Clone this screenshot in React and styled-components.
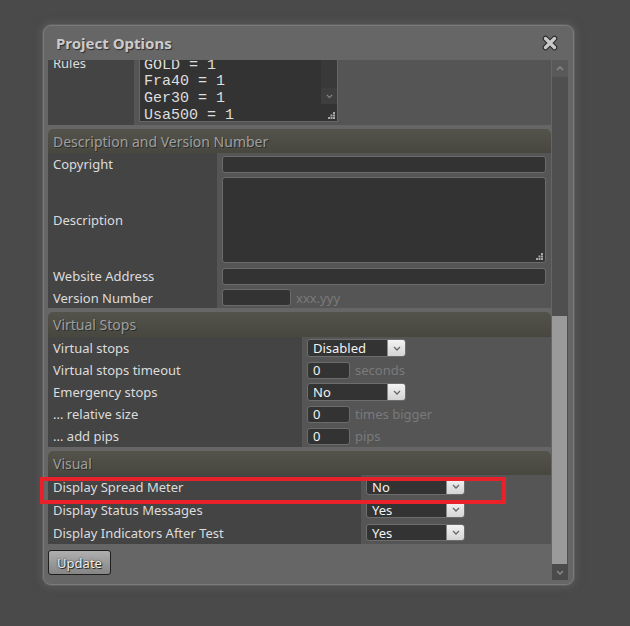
import React from "react";
import styled, { createGlobalStyle } from "styled-components";

const GlobalStyle = createGlobalStyle`
  html, body {
    margin: 0;
    padding: 0;
    background: #4a4a4a;
  }
  body {
    width: 630px;
    height: 626px;
    overflow: hidden;
    font-family: "Noto Sans", "Open Sans", sans-serif;
    font-size: 13px;
    color: #dcdcdc;
  }
`;

const Page = styled.div`
  width: 630px;
  height: 626px;
  box-sizing: border-box;
  padding: 25px 0 0 43px;
`;

const Dialog = styled.div`
  position: relative;
  width: 531px;
  height: 560px;
  box-sizing: border-box;
  display: flex;
  flex-direction: column;
  padding: 0 5px 4px 4px;
  background: #666;
  border: 1px solid #7b7b7b;
  border-radius: 8px;
  box-shadow: 0 0 0 1px #5f5f5f, 0 0 7px 3px rgba(96, 96, 96, 0.55);
`;

const TitleBar = styled.div`
  height: 34px;
  flex-shrink: 0;
  display: flex;
  align-items: center;
  justify-content: space-between;
  padding: 0 10px 1px 8px;
  box-sizing: border-box;
`;

const Title = styled.h1`
  margin: 0;
  font-size: 15px;
  font-weight: 700;
  color: #cbcbcb;
  text-shadow: 1px 1px 1px #2e2e2e;
`;

const CloseButton = styled.button`
  width: 16px;
  height: 16px;
  padding: 0;
  border: 0;
  background: none;
  display: flex;
`;

const Body = styled.div`
  flex: 1;
  display: flex;
  min-height: 0;
`;

const Viewport = styled.div`
  flex: 1;
  display: flex;
  flex-direction: column;
  justify-content: flex-end;
  overflow: hidden;
  padding-right: 1px;
  & > * {
    flex-shrink: 0;
  }
`;

const ScrollBar = styled.div`
  width: 16px;
  display: flex;
  flex-direction: column;
  background: #4f4f4f;
`;

const ScrollButton = styled.div`
  height: ${(p) => (p.$up ? 17 : 16)}px;
  flex-shrink: 0;
  display: flex;
  align-items: center;
  justify-content: center;
  background: ${(p) => (p.$up ? "#595959" : "#4b4b4b")};
`;

const ScrollTrack = styled.div`
  flex: 1;
  display: flex;
  flex-direction: column;
  justify-content: flex-end;
`;

const ScrollThumb = styled.div`
  height: 248px;
  margin-right: 1px;
  background: #9a9a9a;
`;

const Section = styled.section`
  display: flex;
  flex-direction: column;
  margin-top: ${(p) => (p.$first ? 0 : 4)}px;
`;

const SectionHeader = styled.div`
  height: ${(p) => p.$h || 24}px;
  box-sizing: border-box;
  display: flex;
  align-items: center;
  padding-left: 5px;
  border-radius: 5px 5px 0 0;
  background: linear-gradient(#53534b, #47473f);
  font-size: 14px;
  color: #9e9e9e;
  text-shadow: 1px 1px 0 #2c2c2c;
`;

const Row = styled.div`
  display: grid;
  grid-template-columns: ${(p) => p.$label}px 1fr;
  height: ${(p) => p.$h}px;
`;

const LabelCell = styled.div`
  display: flex;
  align-items: ${(p) => (p.$top ? "flex-start" : "center")};
  padding: ${(p) => (p.$top ? "6px" : "0")} 5px 0 5px;
  background: #444;
  white-space: nowrap;
  color: #dcdcdc;
`;

const ValueCell = styled.div`
  display: flex;
  align-items: ${(p) => (p.$end ? "flex-end" : "center")};
  gap: 5px;
  padding: 0 5px ${(p) => (p.$end ? 3 : 0)}px 5px;
  background: #555;
  min-width: 0;
`;

const TextInput = styled.div`
  box-sizing: border-box;
  width: ${(p) => (p.$w ? `${p.$w}px` : "100%")};
  height: ${(p) => p.$h || 17}px;
  flex-shrink: 0;
  display: flex;
  align-items: center;
  padding-left: 5px;
  background: #333;
  border: 1px solid #6b6b6b;
  border-radius: 3px;
  color: #f2f2f2;
  position: relative;
`;

const Unit = styled.span`
  color: #7a7a7a;
  white-space: nowrap;
`;

const Select = styled.div`
  box-sizing: border-box;
  width: 99px;
  height: ${(p) => p.$h}px;
  display: flex;
  background: #333;
  border: 1px solid #6d6d6d;
  border-radius: 3px;
  overflow: hidden;
`;

const SelectValue = styled.span`
  flex: 1;
  display: flex;
  align-items: center;
  padding-left: 5px;
  color: #f2f2f2;
`;

const SelectArrow = styled.span`
  width: 17px;
  display: flex;
  align-items: center;
  justify-content: center;
  background: linear-gradient(#f3f3f3, #d4d4d4);
  border-left: 1px solid #8a8a8a;
`;

const CodeBox = styled.div`
  box-sizing: border-box;
  width: 199px;
  height: 72px;
  display: flex;
  background: #333;
  border: 1px solid #666;
`;

const CodeLines = styled.pre`
  flex: 1;
  margin: 0;
  padding: 6.5px 0 0 4px;
  font-family: "Liberation Mono", "DejaVu Sans Mono", monospace;
  font-size: 15px;
  line-height: 16.7px;
  color: #dedede;
`;

const InnerScroll = styled.div`
  width: 16px;
  display: flex;
  flex-direction: column;
`;

const InnerTrack = styled.div`
  flex: 1;
  background: #393939;
`;

const InnerButton = styled.div`
  height: 16px;
  display: flex;
  align-items: center;
  justify-content: center;
  background: #3e3e3e;
`;

const InnerCorner = styled.div`
  height: 17px;
  display: flex;
  align-items: flex-end;
  justify-content: flex-end;
  padding: 0 2px 2px 0;
  box-sizing: border-box;
`;

const GripSpot = styled.span`
  position: absolute;
  right: 2px;
  bottom: 2px;
  display: flex;
`;

const Footer = styled.div`
  padding: 6px 0 5px 0;
  display: flex;
`;

const Button = styled.button`
  width: 63px;
  height: 25px;
  padding: 0;
  border: 1px solid #1f1f1f;
  border-radius: 3px;
  background: linear-gradient(#afafaf, #858585);
  font-family: "Noto Sans", "Open Sans", sans-serif;
  font-size: 13px;
  color: #f0f0f0;
  text-shadow: 0 0 2px #1a1a1a, 1px 1px 0 #333;
`;

const Highlight = styled.div`
  position: absolute;
  left: -4px;
  top: 451px;
  width: 466px;
  height: 27px;
  box-sizing: border-box;
  border: 4px solid #e8212b;
  pointer-events: none;
`;

const Chevron = ({ dir = "down", color = "#555", w = 8 }) => (
  <svg width={w} height={w / 2 + 1} viewBox="0 0 8 5">
    <path
      d={dir === "down" ? "M1 1 L4 4 L7 1" : "M1 4 L4 1 L7 4"}
      fill="none"
      stroke={color}
      strokeWidth="1.3"
    />
  </svg>
);

const CloseIcon = () => (
  <svg width="16" height="16" viewBox="0 0 16 16">
    <g strokeLinecap="round">
      <path d="M3.5 3.5 L12.5 12.5 M12.5 3.5 L3.5 12.5" stroke="#2a2a2a" strokeWidth="5.6" />
      <path d="M3.5 3.5 L12.5 12.5 M12.5 3.5 L3.5 12.5" stroke="#c9c9c9" strokeWidth="3.4" />
    </g>
  </svg>
);

const Grip = () => (
  <svg width="7" height="7" viewBox="0 0 7 7" fill="#a8a8a8">
    <rect x="5" y="0" width="2" height="2" />
    <rect x="2.5" y="2.5" width="2" height="2" />
    <rect x="5" y="2.5" width="2" height="2" />
    <rect x="0" y="5" width="2" height="2" />
    <rect x="2.5" y="5" width="2" height="2" />
    <rect x="5" y="5" width="2" height="2" />
  </svg>
);

const Dropdown = ({ value, h = 18 }) => (
  <Select $h={h}>
    <SelectValue>{value}</SelectValue>
    <SelectArrow>
      <Chevron color="#666" w={8} />
    </SelectArrow>
  </Select>
);

const rules = ["GOLD = 1", "Fra40 = 1", "Ger30 = 1", "Usa500 = 1"];

const virtualStops = [
  { label: "Virtual stops", select: "Disabled" },
  { label: "Virtual stops timeout", input: "0", unit: "seconds" },
  { label: "Emergency stops", select: "No" },
  { label: "... relative size", input: "0", unit: "times bigger" },
  { label: "... add pips", input: "0", unit: "pips" },
];

const visual = [
  { label: "Display Spread Meter", value: "No" },
  { label: "Display Status Messages", value: "Yes" },
  { label: "Display Indicators After Test", value: "Yes" },
];

export default function App() {
  return (
    <Page>
      <GlobalStyle />
      <Dialog>
        <TitleBar>
          <Title>Project Options</Title>
          <CloseButton aria-label="Close">
            <CloseIcon />
          </CloseButton>
        </TitleBar>
        <Body>
          <Viewport>
            <Section $first>
              <Row $label={86} $h={77}>
                <LabelCell $top>Rules</LabelCell>
                <ValueCell $end>
                  <CodeBox>
                    <CodeLines>{rules.join("\n")}</CodeLines>
                    <InnerScroll>
                      <InnerTrack />
                      <InnerButton>
                        <Chevron color="#8a8a8a" w={7} />
                      </InnerButton>
                      <InnerCorner>
                        <Grip />
                      </InnerCorner>
                    </InnerScroll>
                  </CodeBox>
                </ValueCell>
              </Row>
            </Section>

            <Section>
              <SectionHeader>Description and Version Number</SectionHeader>
              <Row $label={169} $h={22}>
                <LabelCell>Copyright</LabelCell>
                <ValueCell>
                  <TextInput />
                </ValueCell>
              </Row>
              <Row $label={169} $h={90}>
                <LabelCell>Description</LabelCell>
                <ValueCell>
                  <TextInput $h={86}>
                    <GripSpot>
                      <Grip />
                    </GripSpot>
                  </TextInput>
                </ValueCell>
              </Row>
              <Row $label={169} $h={22}>
                <LabelCell>Website Address</LabelCell>
                <ValueCell>
                  <TextInput />
                </ValueCell>
              </Row>
              <Row $label={169} $h={21}>
                <LabelCell>Version Number</LabelCell>
                <ValueCell>
                  <TextInput $w={69} />
                  <Unit>xxx.yyy</Unit>
                </ValueCell>
              </Row>
            </Section>

            <Section>
              <SectionHeader $h={25}>Virtual Stops</SectionHeader>
              {virtualStops.map((r) => (
                <Row key={r.label} $label={254} $h={22}>
                  <LabelCell>{r.label}</LabelCell>
                  <ValueCell>
                    {r.select ? (
                      <Dropdown value={r.select} h={18} />
                    ) : (
                      <>
                        <TextInput $w={43}>{r.input}</TextInput>
                        <Unit>{r.unit}</Unit>
                      </>
                    )}
                  </ValueCell>
                </Row>
              ))}
            </Section>

            <Section>
              <SectionHeader>Visual</SectionHeader>
              {visual.map((r) => (
                <Row key={r.label} $label={313} $h={23}>
                  <LabelCell>{r.label}</LabelCell>
                  <ValueCell>
                    <Dropdown value={r.value} h={17} />
                  </ValueCell>
                </Row>
              ))}
            </Section>

            <Footer>
              <Button>Update</Button>
            </Footer>
          </Viewport>

          <ScrollBar>
            <ScrollButton $up>
              <Chevron dir="up" color="#8c8c8c" w={8} />
            </ScrollButton>
            <ScrollTrack>
              <ScrollThumb />
            </ScrollTrack>
            <ScrollButton>
              <Chevron color="#8c8c8c" w={8} />
            </ScrollButton>
          </ScrollBar>
        </Body>
        <Highlight />
      </Dialog>
    </Page>
  );
}
